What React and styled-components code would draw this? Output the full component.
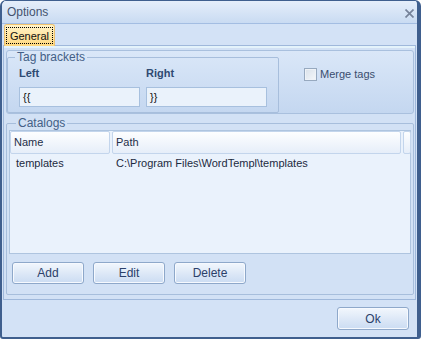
import React from 'react';
import styled, { createGlobalStyle } from 'styled-components';

const GlobalStyle = createGlobalStyle`
html, body {
  margin: 0;
  padding: 0;
  background: #ffffff;
}
body {
  font-family: "Liberation Sans", Arial, sans-serif;
  font-size: 11px;
}
`;

const Window = styled.div`
width: 421px;
height: 339px;
box-sizing: border-box;
display: flex;
flex-direction: column;
background: #d3e2f6;
border-style: solid;
border-color: #3f5f8e;
border-width: 1px 4px 2px 2px;
border-radius: 6px 6px 3px 3px;
overflow: hidden;
`;

const TitleBar = styled.div`
height: 22px;
flex: none;
display: flex;
align-items: center;
justify-content: space-between;
padding: 0 3px 0 5px;
background: linear-gradient(#e5eefa, #c9dbf2);
border-bottom: 1px solid #a3bde2;
`;

const Title = styled.span`
font-size: 12px;
color: #44536f;
`;

const CloseIcon = styled.svg`
width: 9px;
height: 9px;
margin-top: 2px;
`;

const TabStrip = styled.div`
height: 21px;
flex: none;
display: flex;
align-items: flex-end;
padding-left: 2px;
`;

const Tab = styled.div`
position: relative;
z-index: 1;
width: 51px;
height: 22px;
margin-bottom: -1px;
box-sizing: border-box;
display: flex;
align-items: center;
justify-content: center;
background: linear-gradient(#fff3c8, #ffd87f);
border: 1px solid #efc370;
border-bottom: none;
border-radius: 3px 3px 0 0;
`;

const TabLabel = styled.span`
padding: 2px 3px 1px;
border: 1px dotted #000;
color: #111;
`;

const TabPage = styled.div`
height: 255px;
flex: none;
margin: 0 1px;
box-sizing: border-box;
display: flex;
flex-direction: column;
padding: 4px 1px 0 2px;
border: 1px solid #9fb8db;
box-shadow: inset 0 2px 0 #e4f3fb;
background: #d2e1f5;
`;

const TopPanel = styled.div`
height: 64px;
flex: none;
box-sizing: border-box;
display: flex;
border: 1px solid #a9c0de;
border-radius: 3px;
background: linear-gradient(#dae7f8, #c4d7f0);
`;

const Group = styled.fieldset`
margin: 0;
box-sizing: border-box;
padding: 0 ${({ pad }) => pad}px;
border: 1px solid #a7bedc;
border-radius: 2px;
width: ${({ w }) => w};
height: ${({ h }) => h}px;
min-width: 0;
`;

const Legend = styled.legend`
margin-left: 7px;
padding: 0 2px;
font-size: 12px;
color: #445f86;
line-height: 12px;
`;

const BracketGrid = styled.div`
display: grid;
grid-template-columns: 121px 121px;
column-gap: 6px;
padding: 3px 0 0 11px;
`;

const FieldLabel = styled.div`
font-weight: bold;
color: #2f4a72;
height: 15px;
line-height: 15px;
margin-bottom: 6px;
`;

const Input = styled.div`
height: 20px;
box-sizing: border-box;
border: 1px solid #a7c0de;
background: #eaf2fb;
padding: 0 3px;
line-height: 18px;
color: #111;
`;

const MergeArea = styled.div`
flex: 1;
display: flex;
align-items: flex-start;
padding: 17px 0 0 25px;
gap: 3px;
`;

const CheckBox = styled.span`
width: 13px;
height: 13px;
box-sizing: border-box;
border: 1px solid #97a9bf;
background: linear-gradient(135deg, #d9e1ea, #f4f7fa);
box-shadow: inset 0 0 0 1px #eef2f7;
`;

const CheckLabel = styled.span`
color: #3a4d6e;
line-height: 13px;
`;

const Catalogs = styled(Group)`
margin-top: 3px;
padding: 0 2px;
`;

const List = styled.div`
height: 124px;
margin-top: 1px;
box-sizing: border-box;
border: 1px solid #aec4df;
background: #eaf2fc;
`;

const HeaderRow = styled.div`
display: flex;
height: 23px;
`;

const HeaderCell = styled.div`
width: ${({ w }) => w}px;
flex: none;
box-sizing: border-box;
margin-right: 2px;
padding-left: 3px;
line-height: 21px;
color: #1e2e48;
border: 1px solid #c3d5ec;
border-radius: 2px;
background: linear-gradient(#fdfeff, #e6eef9);
`;

const Row = styled.div`
display: flex;
height: 18px;
align-items: center;
color: #1c2a40;
`;

const Cell = styled.div`
width: ${({ w }) => w}px;
padding-left: ${({ pl }) => pl}px;
flex: none;
box-sizing: border-box;
white-space: nowrap;
`;

const ButtonRow = styled.div`
display: flex;
gap: 9px;
padding: 8px 0 0 3px;
`;

const Button = styled.div`
width: 72px;
height: ${({ h }) => h || 22}px;
box-sizing: border-box;
display: flex;
align-items: center;
justify-content: center;
border: 1px solid #8ea8ca;
border-radius: 3px;
background: linear-gradient(#f2f7fd, #dae6f6 60%, #cbdcf2);
box-shadow: inset 0 0 0 1px #f6f9fe;
color: #2b406a;
font-size: 12px;
`;

const Footer = styled.div`
flex: 1;
display: flex;
justify-content: flex-end;
padding: 7px 8px 0 0;
`;

export default function App() {
  return (
    <>
      <GlobalStyle />
      <Window>
        <TitleBar>
          <Title>Options</Title>
          <CloseIcon viewBox="0 0 9 9">
            <path d="M0.5 0.5 L8.5 8.5 M8.5 0.5 L0.5 8.5" stroke="#76839a" strokeWidth="1.7" />
          </CloseIcon>
        </TitleBar>
        <TabStrip>
          <Tab>
            <TabLabel>General</TabLabel>
          </Tab>
        </TabStrip>
        <TabPage>
          <TopPanel>
            <Group w="272px" h={62} pad={0}>
              <Legend>Tag brackets</Legend>
              <BracketGrid>
                <div>
                  <FieldLabel>Left</FieldLabel>
                  <Input>{'{{'}</Input>
                </div>
                <div>
                  <FieldLabel>Right</FieldLabel>
                  <Input>{'}}'}</Input>
                </div>
              </BracketGrid>
            </Group>
            <MergeArea>
              <CheckBox />
              <CheckLabel>Merge tags</CheckLabel>
            </MergeArea>
          </TopPanel>
          <Catalogs w="408px" h={178}>
            <Legend>Catalogs</Legend>
            <List>
              <HeaderRow>
                <HeaderCell w={100}>Name</HeaderCell>
                <HeaderCell w={289}>Path</HeaderCell>
                <HeaderCell w={8} />
              </HeaderRow>
              <Row>
                <Cell w={101} pl={6}>templates</Cell>
                <Cell w={280} pl={5}>C:\Program Files\WordTempl\templates</Cell>
              </Row>
            </List>
            <ButtonRow>
              <Button>Add</Button>
              <Button>Edit</Button>
              <Button>Delete</Button>
            </ButtonRow>
          </Catalogs>
        </TabPage>
        <Footer>
          <Button h={23}>Ok</Button>
        </Footer>
      </Window>
    </>
  );
}
